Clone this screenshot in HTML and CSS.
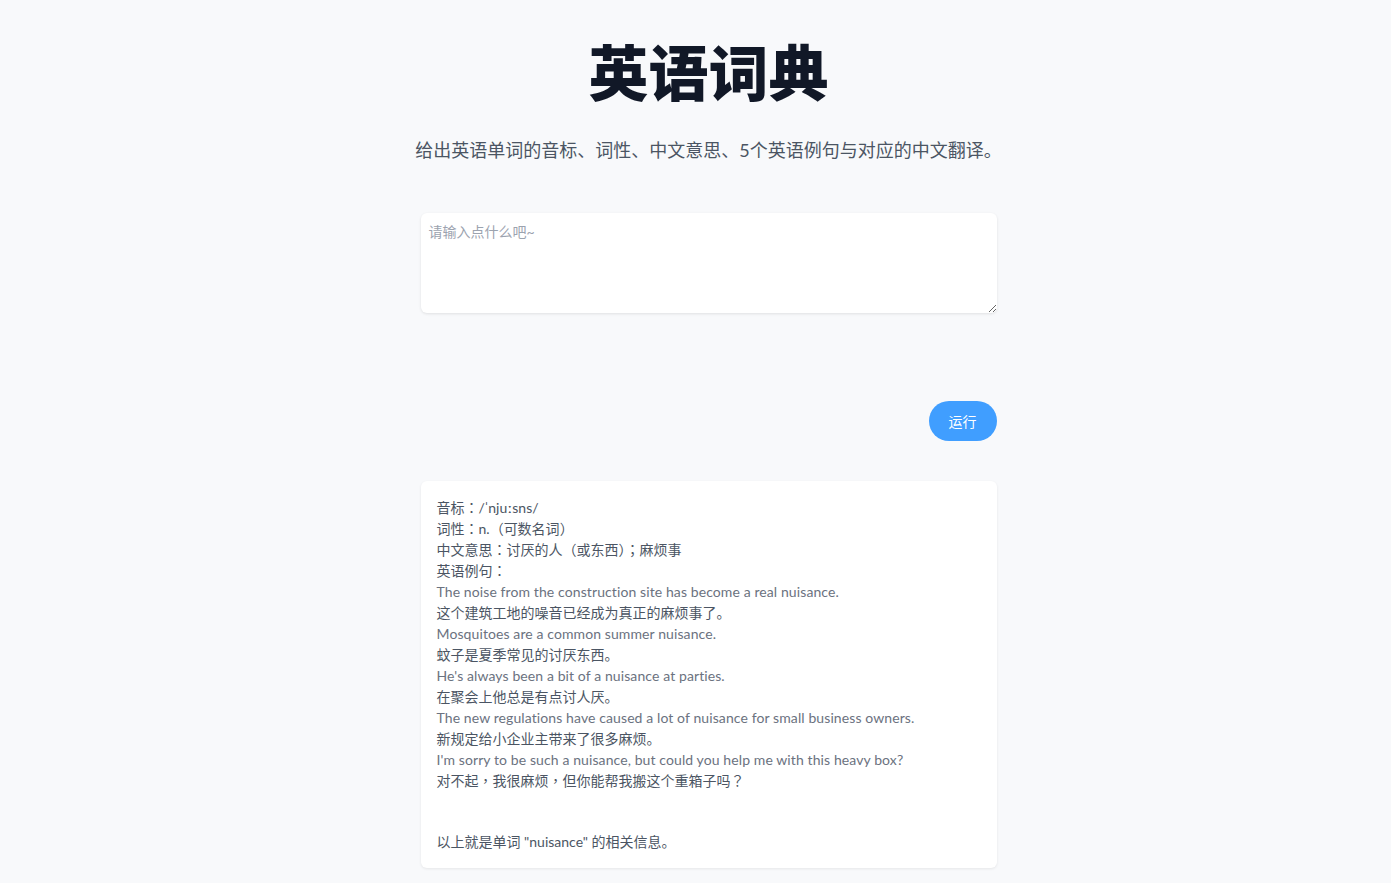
FILE: index.html
```html
<!DOCTYPE html>
<html lang="zh-CN">
<head>
    <meta charset="UTF-8">
    <meta name="viewport" content="width=device-width, initial-scale=1.0">
    <title>英语词典</title>
    <link rel="stylesheet" href="styles.css">
</head>
<body>

<div class="page">
    <!-- Header -->
    <h1 class="title">英语词典</h1>
    <p class="subtitle">给出英语单词的音标、词性、中文意思、5个英语例句与对应的中文翻译。</p>

    <!-- Input -->
    <textarea class="prompt-input" placeholder="请输入点什么吧~"></textarea>

    <div class="actions">
        <button class="run-button">运行</button>
    </div>

    <!-- Result -->
    <div class="result-card">
        <div class="result-text">音标<span class="punc" lang="zh-TW">：</span>/ˈnjuːsns/
词性<span class="punc" lang="zh-TW">：</span>n.<span class="punc" lang="zh-TW">（</span>可数名词<span class="punc" lang="zh-TW">）</span>
中文意思<span class="punc" lang="zh-TW">：</span>讨厌的人<span class="punc" lang="zh-TW">（</span>或东西<span class="punc" lang="zh-TW">）；</span>麻烦事
英语例句<span class="punc" lang="zh-TW">：</span>
<span class="en">The noise from the construction site has become a real nuisance.</span>
这个建筑工地的噪音已经成为真正的麻烦事了。
<span class="en">Mosquitoes are a common summer nuisance.</span>
蚊子是夏季常见的讨厌东西。
<span class="en">He's always been a bit of a nuisance at parties.</span>
在聚会上他总是有点讨人厌。
<span class="en">The new regulations have caused a lot of nuisance for small business owners.</span>
新规定给小企业主带来了很多麻烦。
<span class="en">I'm sorry to be such a nuisance, but could you help me with this heavy box?</span>
对不起<span class="punc" lang="zh-TW">，</span>我很麻烦<span class="punc" lang="zh-TW">，</span>但你能帮我搬这个重箱子吗<span class="punc" lang="zh-TW">？</span>
<span class="gap"></span>
以上就是单词 "nuisance" 的相关信息。</div>
    </div>
</div>

</body>
</html>
```

FILE: styles.css
```css
body {
    margin: 0;
    padding-left: 26px;
    background-color: #f8f9fb;
    font-family: Lato, "Noto Sans CJK SC", sans-serif;
    color: #4b5563;
}

.page {
    width: 576px;
    margin: 0 auto;
    padding: 38px 0 14px;
    display: flex;
    flex-direction: column;
}

/* Header */
.title {
    margin: 0;
    text-align: center;
    font-size: 60px;
    line-height: 70px;
    font-weight: 900;
    color: #111827;
}

.subtitle {
    margin: 28px -10px 0;
    text-align: center;
    font-size: 18px;
    line-height: 28px;
    color: #4b5563;
}

/* Input */
.prompt-input {
    box-sizing: border-box;
    margin-top: 49px;
    width: 100%;
    height: 100px;
    padding: 8px;
    border: none;
    border-radius: 6px;
    background: #fff;
    box-shadow: 0 1px 3px rgba(0, 0, 0, 0.1);
    font-family: inherit;
    font-size: 14px;
    color: #374151;
    resize: vertical;
    outline: none;
}

.prompt-input::placeholder {
    color: #9ca3af;
}

.actions {
    display: flex;
    justify-content: flex-end;
    margin-top: 88px;
}

.run-button {
    width: 68px;
    height: 40px;
    border: none;
    border-radius: 20px;
    background-color: #409eff;
    color: #fff;
    font-family: inherit;
    font-size: 14px;
    cursor: pointer;
}

/* Result */
.result-card {
    margin-top: 40px;
    padding: 16px;
    background: #fff;
    border-radius: 6px;
    box-shadow: 0 1px 3px rgba(0, 0, 0, 0.08);
}

.result-text {
    white-space: pre-wrap;
    font-size: 14px;
    line-height: 21px;
    color: #4b5563;
}

.result-text .en {
    color: #6b7280;
    letter-spacing: 0.1px;
}

/* full-width punctuation sits centred in its box */
.result-text .punc {
    font-family: "Noto Sans CJK TC", sans-serif;
}

.result-text .gap {
    display: block;
    height: 19px;
}
```
